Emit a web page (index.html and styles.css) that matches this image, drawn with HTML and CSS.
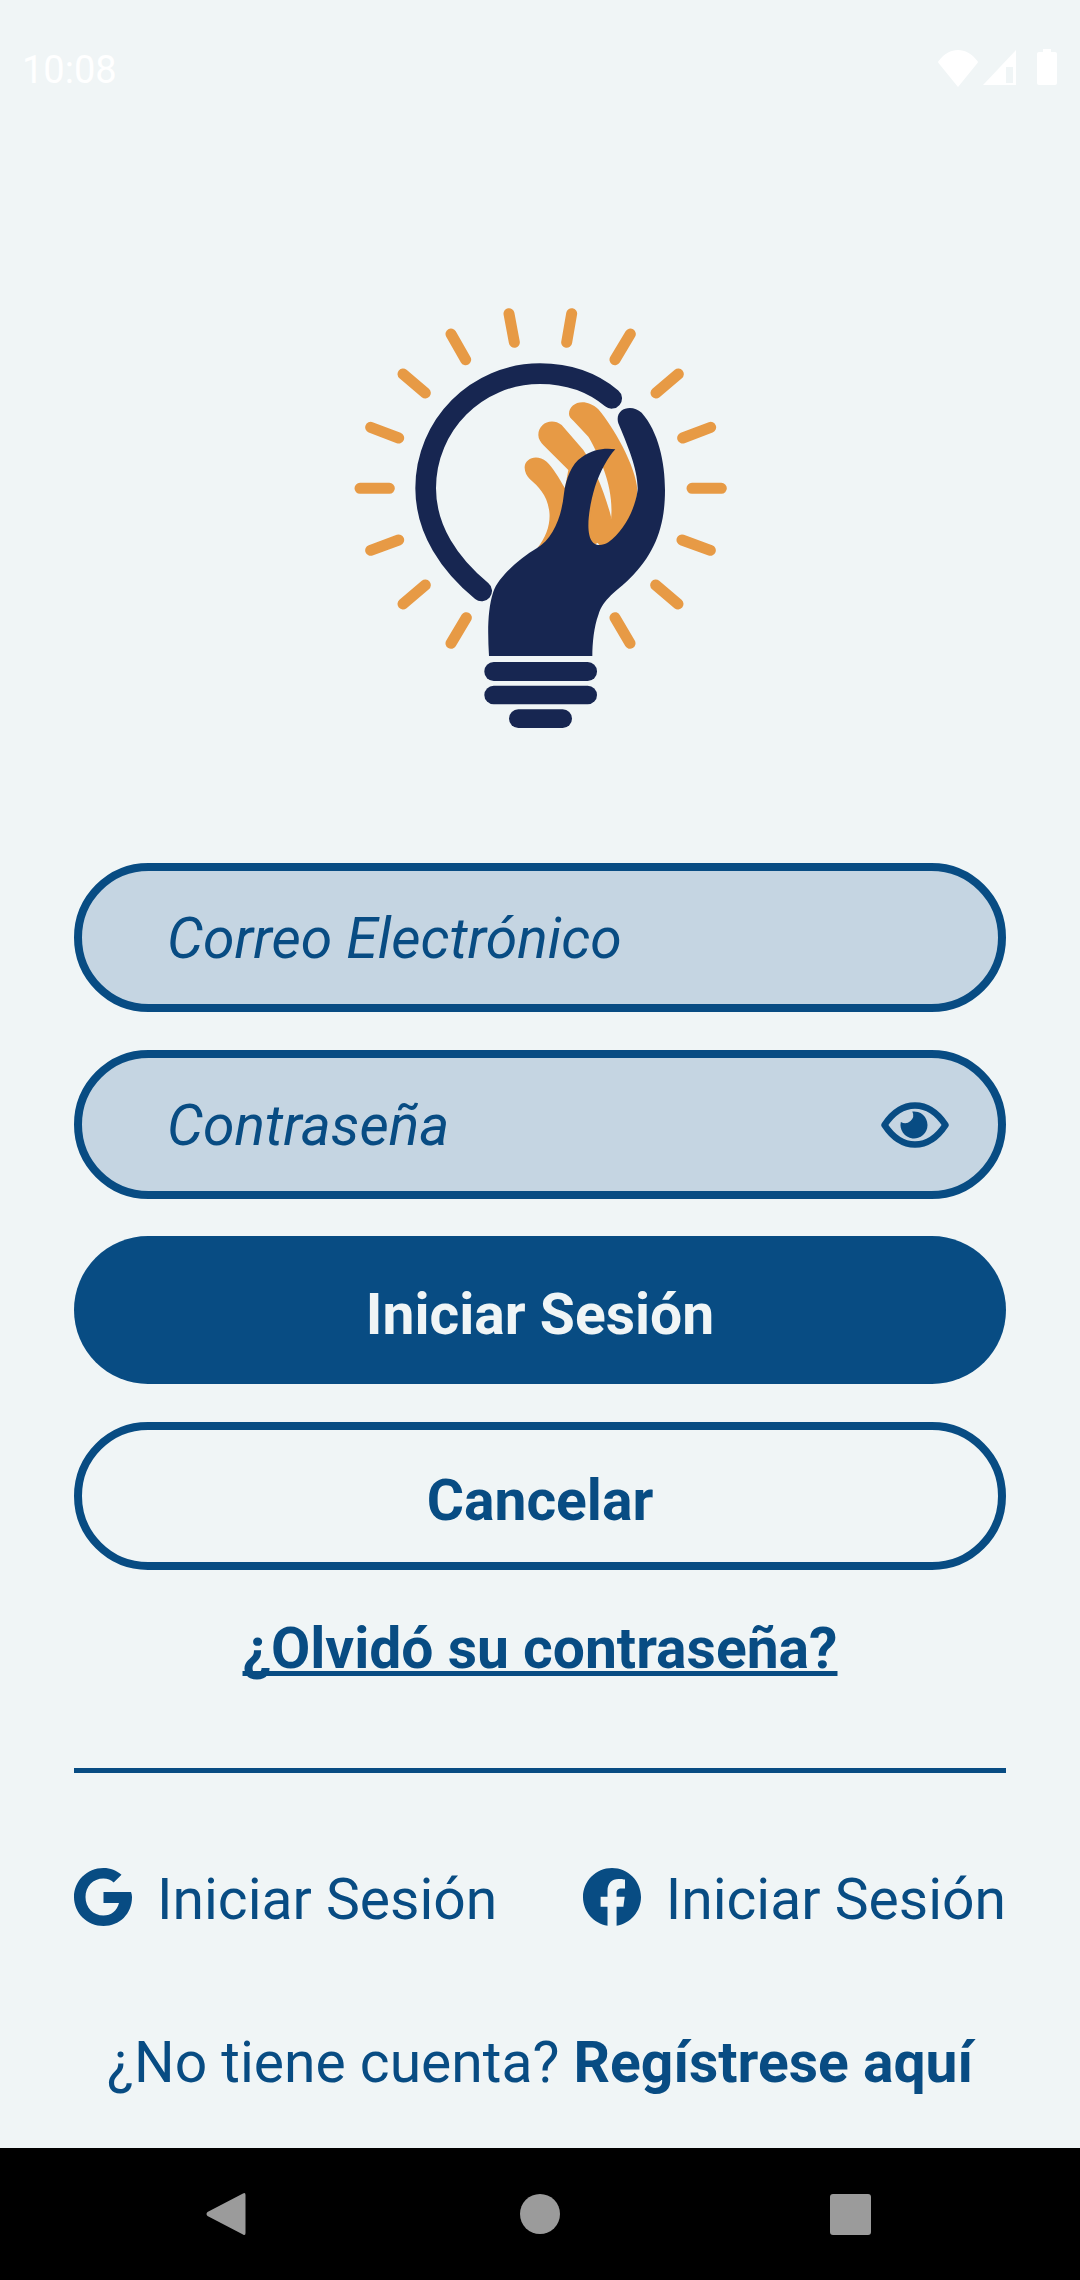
FILE: index.html
```html
<!DOCTYPE html>
<html lang="es">
<head>
<meta charset="utf-8">
<title>Iniciar Sesión</title>
<link rel="stylesheet" href="styles.css">
</head>
<body>
<div class="screen">
  <div class="status">
    <span class="time">10:08</span>
    <div class="status-icons">
      <svg class="ic-wifi" viewBox="0 0 40 37"><path d="M20 37 L0.5 13 Q-0.5 11.5 1 10.5 C6 4 13 0 20 0 S34 4 39 10.5 Q40.5 11.5 39.5 13 Z"/></svg>
      <svg class="ic-signal" viewBox="0 0 33 35"><path fill-rule="evenodd" d="M33 0 V35 H0 Z M23 17 V33 H30 V17 Z"/></svg>
      <svg class="ic-battery" viewBox="0 0 20 36"><path d="M6 0 H14 V3 H18 Q20 3 20 5 V34 Q20 36 18 36 H2 Q0 36 0 34 V5 Q0 3 2 3 H6 Z"/></svg>
    </div>
  </div>
  <div class="logo-wrap">
    <svg class="logo" viewBox="0 0 1260 1380">
      <g class="rays">
        <path d="M537 71 553 157M725 71 710 157M363 132 407 209M901 132 855 209M219 252 286 309M1045 252 978 309M122 412 206 444M1142 412 1058 444M90 595H178M1086 595H1174M122 781 206 750M1141 781 1056 750M219 942 286 885M1044 942 977 885M363 1060 409 983M900 1060 855 983"/>
      </g>
      <path class="navy-line" d="M845 325 C785 275 710 251 630 251 C440 251 287 405 287 595 C287 720 360 825 455 903"/>
      <path class="orange" d="M584 530 C586 505 620 490 650 515 C670 535 685 560 705 595 L720 700 L622 775 C650 740 662 700 658 665 C652 615 625 590 600 568 C590 558 583 545 584 530 Z"/>
      <path class="orange" d="M625 435 C625 400 665 382 695 405 L760 480 C790 525 825 610 843 680 L840 740 L780 770 L700 620 L715 540 L642 467 C632 457 625 447 625 435 Z"/>
      <path class="orange" d="M717 372 C717 338 765 320 805 358 C850 410 918 530 922 600 C920 680 860 765 810 768 L775 720 L800 560 L843 690 C848 640 840 590 820 535 C805 495 785 455 775 440 L730 392 C722 385 717 380 717 372 Z"/>
      <path class="navy" d="M477 1098 C473 1030 472 960 490 905 C505 860 570 805 620 775 C670 745 695 680 702 610 C707 570 725 520 755 502 C790 477 825 474 856 478 C835 500 810 545 795 590 C780 640 770 700 778 735 C785 768 810 772 835 757 C880 725 915 660 923 600 C925 540 890 460 865 400 C852 355 905 340 935 368 C985 425 1005 515 1005 600 C1005 710 975 790 900 865 C860 905 820 925 805 975 C792 1010 787 1060 787 1098 Z"/>
      <rect class="navy" x="463" y="1116" width="338" height="57" rx="28"/>
      <rect class="navy" x="463" y="1187" width="338" height="56" rx="28"/>
      <rect class="navy" x="537" y="1258" width="189" height="56" rx="28"/>
    </svg>
  </div>
  <div class="form">
    <div class="field"><span class="field-text">Correo Electrónico</span></div>
    <div class="field">
      <span class="field-text">Contraseña</span>
      <svg class="eye" viewBox="0 0 68 46">
        <path class="eye-outline" d="M3.5 23 C12 10 22 3.5 34 3.5 S56 10 64.5 23 C56 36 46 42.5 34 42.5 S12 36 3.5 23 Z"/>
        <path class="eye-pupil" d="M31.3 9.6 A13.5 13.5 0 1 1 19.85 19.9 A8 8 0 0 0 31.3 9.6 Z"/>
      </svg>
    </div>
    <div class="btn btn-primary">Iniciar Sesión</div>
    <div class="btn btn-outline">Cancelar</div>
    <a class="forgot">¿Olvidó su contraseña?</a>
    <div class="divider"></div>
    <div class="social">
      <div class="social-item">
        <svg class="social-icon" viewBox="0 0 58 58"><path class="brand" d="M57 24 H29.5 V35 H45 C43 43 37 47.5 29.5 47.5 C19 47.5 11.5 39.5 11.5 29 S19 10.5 29.5 10.5 C33.5 10.5 37 12 39.7 14.5 L47.5 6.7 C42.5 2.5 36.5 0 29.5 0 C13 0 0 13 0 29 S13 58 29.5 58 C45.5 58 58 46 58 29 C58 27.2 57.6 25.5 57 24 Z"/></svg>
        <span>Iniciar Sesión</span>
      </div>
      <div class="social-item">
        <svg class="social-icon" viewBox="0 0 58 58"><path class="brand" d="M58 29 C58 13 45 0 29 0 S0 13 0 29 C0 43.5 10.6 55.5 24.5 57.7 V38.7 H17.6 V28.7 H24.5 V22.6 C24.5 15.3 28.8 11 35.5 11 C38.7 11 42 11.6 42 11.6 V20.4 H38.4 C34.8 20.4 33.6 22.3 33.6 24.6 V28.7 H41.7 L40.4 38.7 H33.6 V57.7 C47.4 55.5 58 43.5 58 29 Z"/></svg>
        <span>Iniciar Sesión</span>
      </div>
    </div>
    <p class="register">¿No tiene cuenta? <strong>Regístrese aquí</strong></p>
  </div>
  <div class="navbar">
    <svg class="nav-back" viewBox="0 0 40 44"><path d="M37 1.5 Q39.5 0 39.5 3 V41 Q39.5 44 37 42.5 L1.5 24 Q-0.5 22 1.5 20 Z"/></svg>
    <div class="nav-home"></div>
    <div class="nav-recent"></div>
  </div>
</div>
</body>
</html>
```
FILE: styles.css
```css
* { box-sizing: border-box; }
html, body { margin: 0; padding: 0; }
body { font-family: Roboto, "Liberation Sans", sans-serif; background: #f0f5f6; color: #084c83; }
.screen { width: 1080px; height: 2280px; display: flex; flex-direction: column; overflow: hidden; }
.status { height: 100px; padding: 50px 22px 0 22px; display: flex; justify-content: space-between; align-items: flex-start; color: #fff; }
.time { font-size: 38px; line-height: 40px; }
.status-icons { display: flex; align-items: flex-start; }
.status-icons svg { fill: #fff; display: block; }
.ic-wifi { width: 40px; height: 37px; margin-right: 5px; }
.ic-signal { width: 33px; height: 35px; margin-right: 21px; }
.ic-battery { width: 20px; height: 36px; margin-top: -1px; margin-right: 1px; }
.logo-wrap { display: flex; justify-content: center; margin-top: 190px; }
.logo { width: 420px; height: 460px; display: block; }
.rays path { stroke: #e79a45; stroke-width: 33; stroke-linecap: round; fill: none; }
.navy-line { stroke: #172651; stroke-width: 62; stroke-linecap: round; fill: none; }
.navy { fill: #172651; }
.orange { fill: #e79a45; }
.form { padding: 113px 74px 0; display: flex; flex-direction: column; }
.field { height: 149px; border: 8px solid #084c83; border-radius: 75px; background: #c5d5e2; display: flex; align-items: center; justify-content: space-between; padding: 2px 49px 0 85px; margin-bottom: 38px; }
.field-text { font-size: 57px; font-style: italic; }
.eye { width: 68px; height: 46px; display: block; margin-top: -2px; }
.eye-outline { fill: none; stroke: #084c83; stroke-width: 6.5; stroke-linejoin: round; }
.eye-pupil { fill: #084c83; }
.btn { height: 148px; border-radius: 75px; display: flex; align-items: center; justify-content: center; font-size: 57px; font-weight: 700; margin-bottom: 38px; padding-top: 9px; }
.btn-primary { background: #084c83; color: #f0f5f6; margin-top: -1px; }
.btn-outline { border: 8px solid #084c83; }
.forgot { font-size: 57px; font-weight: 700; text-decoration: underline; text-decoration-skip-ink: none; text-align: center; line-height: 66px; margin-top: 8px; }
.divider { height: 5px; background: #084c83; margin-top: 86px; }
.social { display: flex; justify-content: space-between; margin-top: 94px; }
.social-item { display: flex; align-items: center; gap: 25px; font-size: 57px; line-height: 66px; }
.social-icon { width: 58px; height: 58px; display: block; flex: none; margin-bottom: 6px; }
.brand { fill: #084c83; }
.register { margin: 97px 0 0; font-size: 57px; line-height: 66px; text-align: center; white-space: nowrap; }
.navbar { margin-top: auto; height: 132px; background: #000; display: flex; align-items: center; justify-content: space-between; padding: 0 209px 0 206px; }
.nav-back { width: 40px; height: 44px; fill: #9b9b9b; display: block; }
.nav-home { width: 40px; height: 40px; border-radius: 50%; background: #9b9b9b; margin-left: 4px; }
.nav-recent { width: 41px; height: 41px; border-radius: 3px; background: #9b9b9b; }
```
